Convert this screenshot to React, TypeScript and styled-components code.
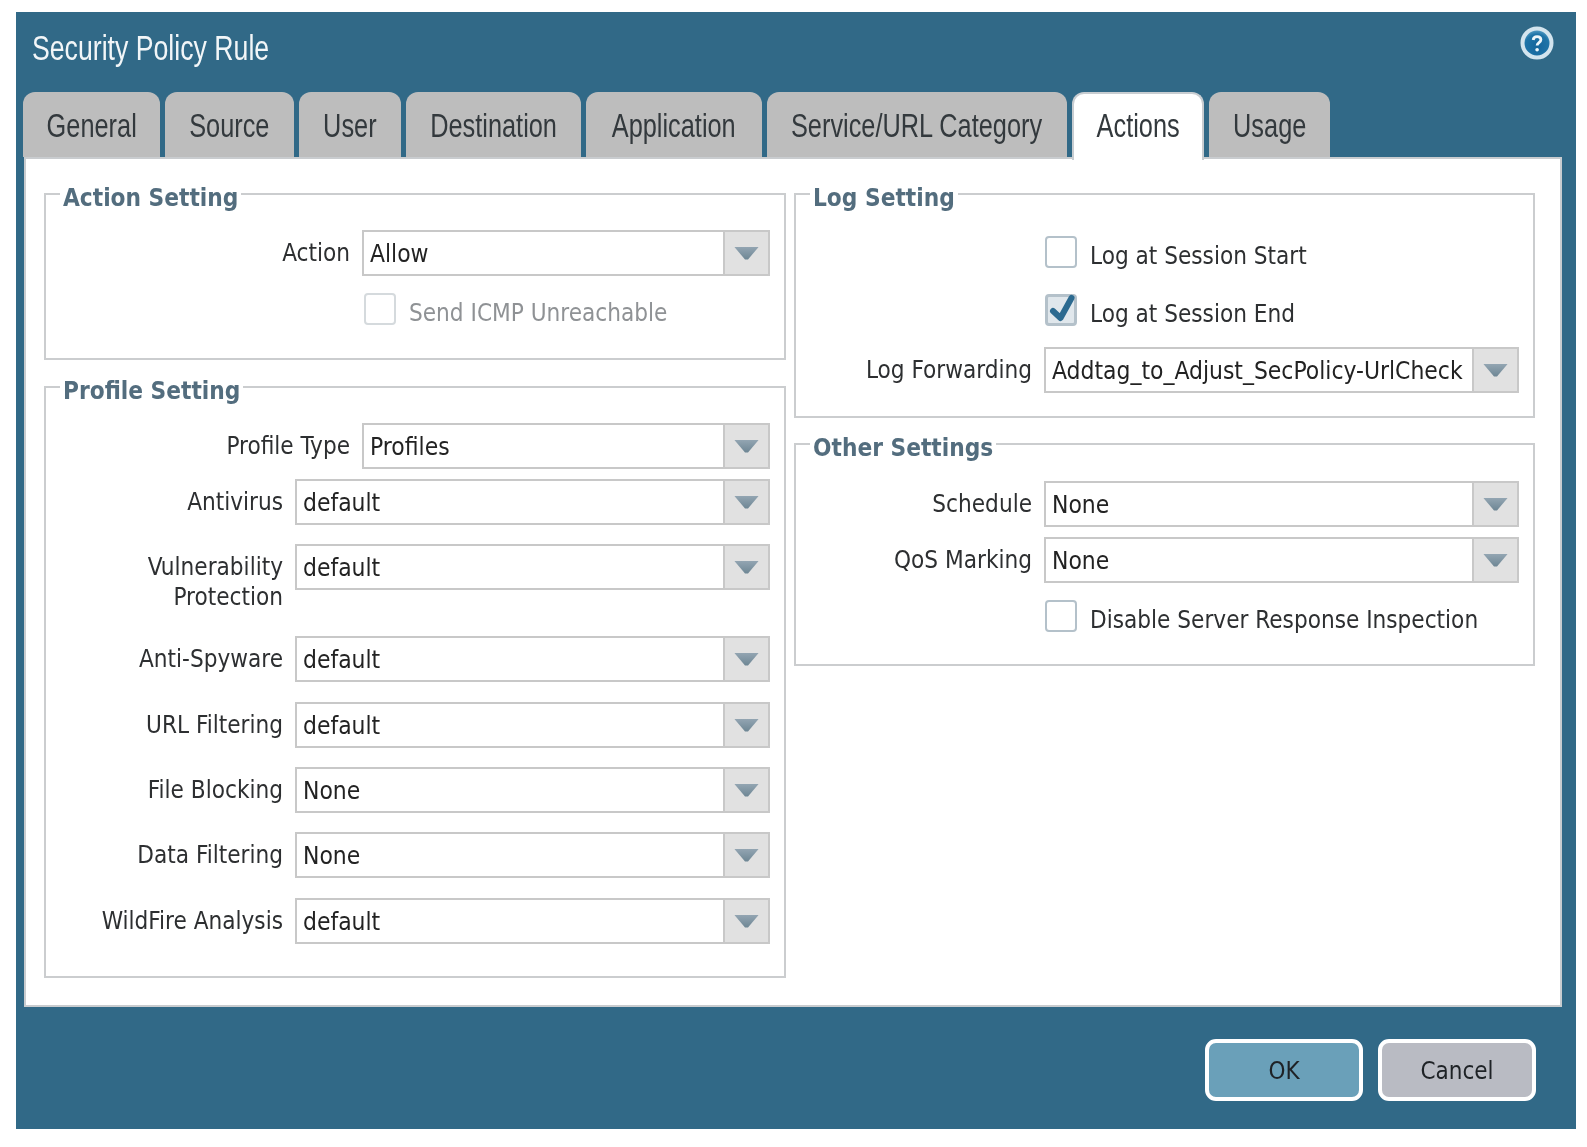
import styled, { createGlobalStyle } from 'styled-components'

const GlobalStyle = createGlobalStyle`
  html, body {
    margin: 0;
    padding: 0;
    background: #fff;
  }
  * {
    box-sizing: border-box;
  }
`

const BODY_FONT = `"DejaVu Sans Condensed", "Noto Sans", sans-serif`
const NARROW_FONT = `"Liberation Sans", sans-serif`

const Page = styled.div`
  width: 1587px;
  height: 1147px;
  padding: 12px 11px 18px 16px;
  font-family: ${BODY_FONT};
`

const Dialog = styled.div`
  height: 100%;
  background: #316987;
  display: flex;
  flex-direction: column;
  filter: blur(0.45px);
`

const Header = styled.div`
  height: 80px;
  display: flex;
  justify-content: space-between;
  padding: 15px 21px 0 16px;
`

const Title = styled.h1`
  margin: 0;
  font-family: ${NARROW_FONT};
  font-weight: 400;
  font-size: 35px;
  line-height: 42px;
  color: #f2f6f8;
  transform: scaleX(0.762);
  transform-origin: left center;
  white-space: nowrap;
`

const HelpIcon = styled.svg`
  width: 36px;
  height: 36px;
  margin-top: -2px;
`

const TabBar = styled.div`
  height: 65px;
  margin-left: 7px;
  display: flex;
  gap: 5px;
`

const Tab = styled.div<{ $width: number; $active?: boolean }>`
  width: ${(p) => p.$width}px;
  height: ${(p) => (p.$active ? 68 : 65)}px;
  position: relative;
  z-index: ${(p) => (p.$active ? 1 : 0)};
  display: flex;
  align-items: center;
  justify-content: center;
  padding: ${(p) => (p.$active ? '0 0 3px' : '2px 0 0')};
  border-radius: 12px 12px 0 0;
  background: ${(p) => (p.$active ? '#fff' : '#bdbdbd')};
  border: ${(p) => (p.$active ? '2px solid #c8cdd1' : 'none')};
  border-bottom: none;
  font-family: ${NARROW_FONT};
  font-size: 33px;
  color: #33393d;
`

const TabText = styled.span`
  flex-shrink: 0;
  white-space: nowrap;
  transform: scaleX(0.768);
`

const Panel = styled.div`
  height: 850px;
  margin: 0 14px 0 8px;
  padding: 34px 25px 0 18px;
  background: #fff;
  border: 2px solid #c9cccf;
  display: grid;
  grid-template-columns: 742px 741px;
  column-gap: 8px;
  align-items: start;
`

const Column = styled.div<{ $gap: number }>`
  display: flex;
  flex-direction: column;
  gap: ${(p) => p.$gap}px;
`

const Group = styled.fieldset<{ $height: number; $top: number }>`
  height: ${(p) => p.$height}px;
  margin: 0;
  min-width: 0;
  padding: ${(p) => p.$top}px 14px 0 0;
  border: 2px solid #cbcdcf;
`

const GroupTitle = styled.legend`
  margin-left: 14px;
  padding: 0 3px;
  height: 2px;
  line-height: 10px;
  font-size: 24.2px;
  font-weight: 700;
  color: #536d7e;
`

const Row = styled.div<{ $labelWidth: number; $after: number }>`
  display: grid;
  grid-template-columns: ${(p) => p.$labelWidth}px minmax(0, 1fr);
  column-gap: 12px;
  align-items: start;
  margin-bottom: ${(p) => p.$after}px;
`

const FieldLabel = styled.div`
  text-align: right;
  font-size: 24.1px;
  line-height: 30px;
  padding-top: 8px;
  color: #2d2f31;
`

const Select = styled.div`
  height: 46px;
  display: flex;
  border: 2px solid #c8c8c8;
  background: #fff;
`

const SelectValue = styled.div`
  flex: 1;
  min-width: 0;
  padding-left: 6px;
  font-size: 24.4px;
  line-height: 43px;
  color: #222;
  white-space: nowrap;
`

const SelectArrow = styled.div`
  width: 45px;
  flex-shrink: 0;
  background: #e1e1e1;
  display: flex;
  align-items: center;
  justify-content: center;
  border-left: 2px solid #c8c8c8;
`

const Arrow = styled.div`
  width: 25px;
  height: 13px;
  background: linear-gradient(#93a5b2, #6c8593);
  clip-path: polygon(0 0, 100% 0, 56% 100%, 44% 100%);
`

const CheckRow = styled.div<{ $left: number; $after: number }>`
  display: flex;
  align-items: flex-start;
  gap: 13px;
  padding-left: ${(p) => p.$left}px;
  margin-bottom: ${(p) => p.$after}px;
`

const CheckBox = styled.div<{ $checked?: boolean; $disabled?: boolean }>`
  width: 32px;
  height: 32px;
  position: relative;
  border-radius: 4px;
  border: ${(p) => (p.$checked ? 3 : 2)}px solid ${(p) => (p.$disabled ? '#d5dadd' : '#b4c1ca')};
  background: ${(p) => (p.$checked ? '#e0e7ec' : '#fff')};
`

const CheckMark = styled.svg`
  position: absolute;
  left: -3px;
  top: -3px;
  width: 32px;
  height: 32px;
  overflow: visible;
`

const CheckLabel = styled.div<{ $disabled?: boolean }>`
  font-size: 24.1px;
  line-height: 32px;
  padding-top: 4px;
  color: ${(p) => (p.$disabled ? '#8f9295' : '#2d2f31')};
`

const Footer = styled.div`
  flex: 1;
  display: flex;
  justify-content: flex-end;
  gap: 15px;
  padding: 32px 40px 0 0;
`

const Button = styled.div<{ $primary?: boolean }>`
  width: 158px;
  height: 62px;
  padding-top: 2px;
  border: 4px solid #fff;
  border-radius: 11px;
  background: ${(p) => (p.$primary ? '#6aa0b9' : '#b9bbc3')};
  display: flex;
  align-items: center;
  justify-content: center;
  font-size: 24px;
  color: #1e2226;
`

const TABS = [
  { label: 'General', width: 137 },
  { label: 'Source', width: 129 },
  { label: 'User', width: 102 },
  { label: 'Destination', width: 175 },
  { label: 'Application', width: 176 },
  { label: 'Service/URL Category', width: 300 },
  { label: 'Actions', width: 132, active: true },
  { label: 'Usage', width: 121 },
]

const PROFILE_ROWS = [
  { label: 'Antivirus', value: 'default', after: 19 },
  { label: 'Vulnerability Protection', value: 'default', after: 24 },
  { label: 'Anti-Spyware', value: 'default', after: 20 },
  { label: 'URL Filtering', value: 'default', after: 19 },
  { label: 'File Blocking', value: 'None', after: 19 },
  { label: 'Data Filtering', value: 'None', after: 20 },
  { label: 'WildFire Analysis', value: 'default', after: 0 },
]

const Dropdown = ({ value }: { value: string }) => (
  <Select>
    <SelectValue>{value}</SelectValue>
    <SelectArrow>
      <Arrow />
    </SelectArrow>
  </Select>
)

const App = () => {
  return (
    <Page>
      <GlobalStyle />
      <Dialog>
        <Header>
          <Title>Security Policy Rule</Title>
          <HelpIcon viewBox="0 0 36 36">
            <defs>
              <radialGradient id="helpFill" cx="50%" cy="62%" r="60%">
                <stop offset="0%" stopColor="#15659c" />
                <stop offset="70%" stopColor="#1f74a8" />
                <stop offset="100%" stopColor="#62a6cb" />
              </radialGradient>
            </defs>
            <circle cx="18" cy="18" r="14.5" fill="url(#helpFill)" stroke="#d3e4ee" strokeWidth="4" />
            <path d="M14.200 15c.2-2.100 1.800-3.300 3.900-3.300 2.200 0 3.800 1.200 3.800 3.100 0 2.800-3.800 2.900-3.800 5.700" fill="none" stroke="#eef6fa" strokeWidth="2.800" />
            <circle cx="18.100" cy="24.800" r="1.800" fill="#eef6fa" />
          </HelpIcon>
        </Header>
        <TabBar>
          {TABS.map((tab) => (
            <Tab key={tab.label} $width={tab.width} $active={tab.active}>
              <TabText>{tab.label}</TabText>
            </Tab>
          ))}
        </TabBar>
        <Panel>
          <Column $gap={26}>
            <Group $height={167} $top={35}>
              <GroupTitle>Action Setting</GroupTitle>
              <Row $labelWidth={304} $after={17}>
                <FieldLabel>Action</FieldLabel>
                <Dropdown value="Allow" />
              </Row>
              <CheckRow $left={318} $after={0}>
                <CheckBox $disabled />
                <CheckLabel $disabled>Send ICMP Unreachable</CheckLabel>
              </CheckRow>
            </Group>
            <Group $height={592} $top={35}>
              <GroupTitle>Profile Setting</GroupTitle>
              <Row $labelWidth={304} $after={10}>
                <FieldLabel>Profile Type</FieldLabel>
                <Dropdown value="Profiles" />
              </Row>
              {PROFILE_ROWS.map((row) => (
                <Row key={row.label} $labelWidth={237} $after={row.after}>
                  <FieldLabel>{row.label}</FieldLabel>
                  <Dropdown value={row.value} />
                </Row>
              ))}
            </Group>
          </Column>
          <Column $gap={25}>
            <Group $height={225} $top={41}>
              <GroupTitle>Log Setting</GroupTitle>
              <CheckRow $left={249} $after={22}>
                <CheckBox />
                <CheckLabel>Log at Session Start</CheckLabel>
              </CheckRow>
              <CheckRow $left={249} $after={17}>
                <CheckBox $checked>
                  <CheckMark viewBox="0 0 32 32">
                    <path d="M8 17l7.500 7L26.500 4" fill="none" stroke="#2c6a90" strokeWidth="6" strokeLinejoin="round" strokeLinecap="round" />
                  </CheckMark>
                </CheckBox>
                <CheckLabel>Log at Session End</CheckLabel>
              </CheckRow>
              <Row $labelWidth={236} $after={0}>
                <FieldLabel>Log Forwarding</FieldLabel>
                <Dropdown value="Addtag_to_Adjust_SecPolicy-UrlCheck" />
              </Row>
            </Group>
            <Group $height={223} $top={36}>
              <GroupTitle>Other Settings</GroupTitle>
              <Row $labelWidth={236} $after={10}>
                <FieldLabel>Schedule</FieldLabel>
                <Dropdown value="None" />
              </Row>
              <Row $labelWidth={236} $after={17}>
                <FieldLabel>QoS Marking</FieldLabel>
                <Dropdown value="None" />
              </Row>
              <CheckRow $left={249} $after={0}>
                <CheckBox />
                <CheckLabel>Disable Server Response Inspection</CheckLabel>
              </CheckRow>
            </Group>
          </Column>
        </Panel>
        <Footer>
          <Button $primary>OK</Button>
          <Button>Cancel</Button>
        </Footer>
      </Dialog>
    </Page>
  )
}

export default App
